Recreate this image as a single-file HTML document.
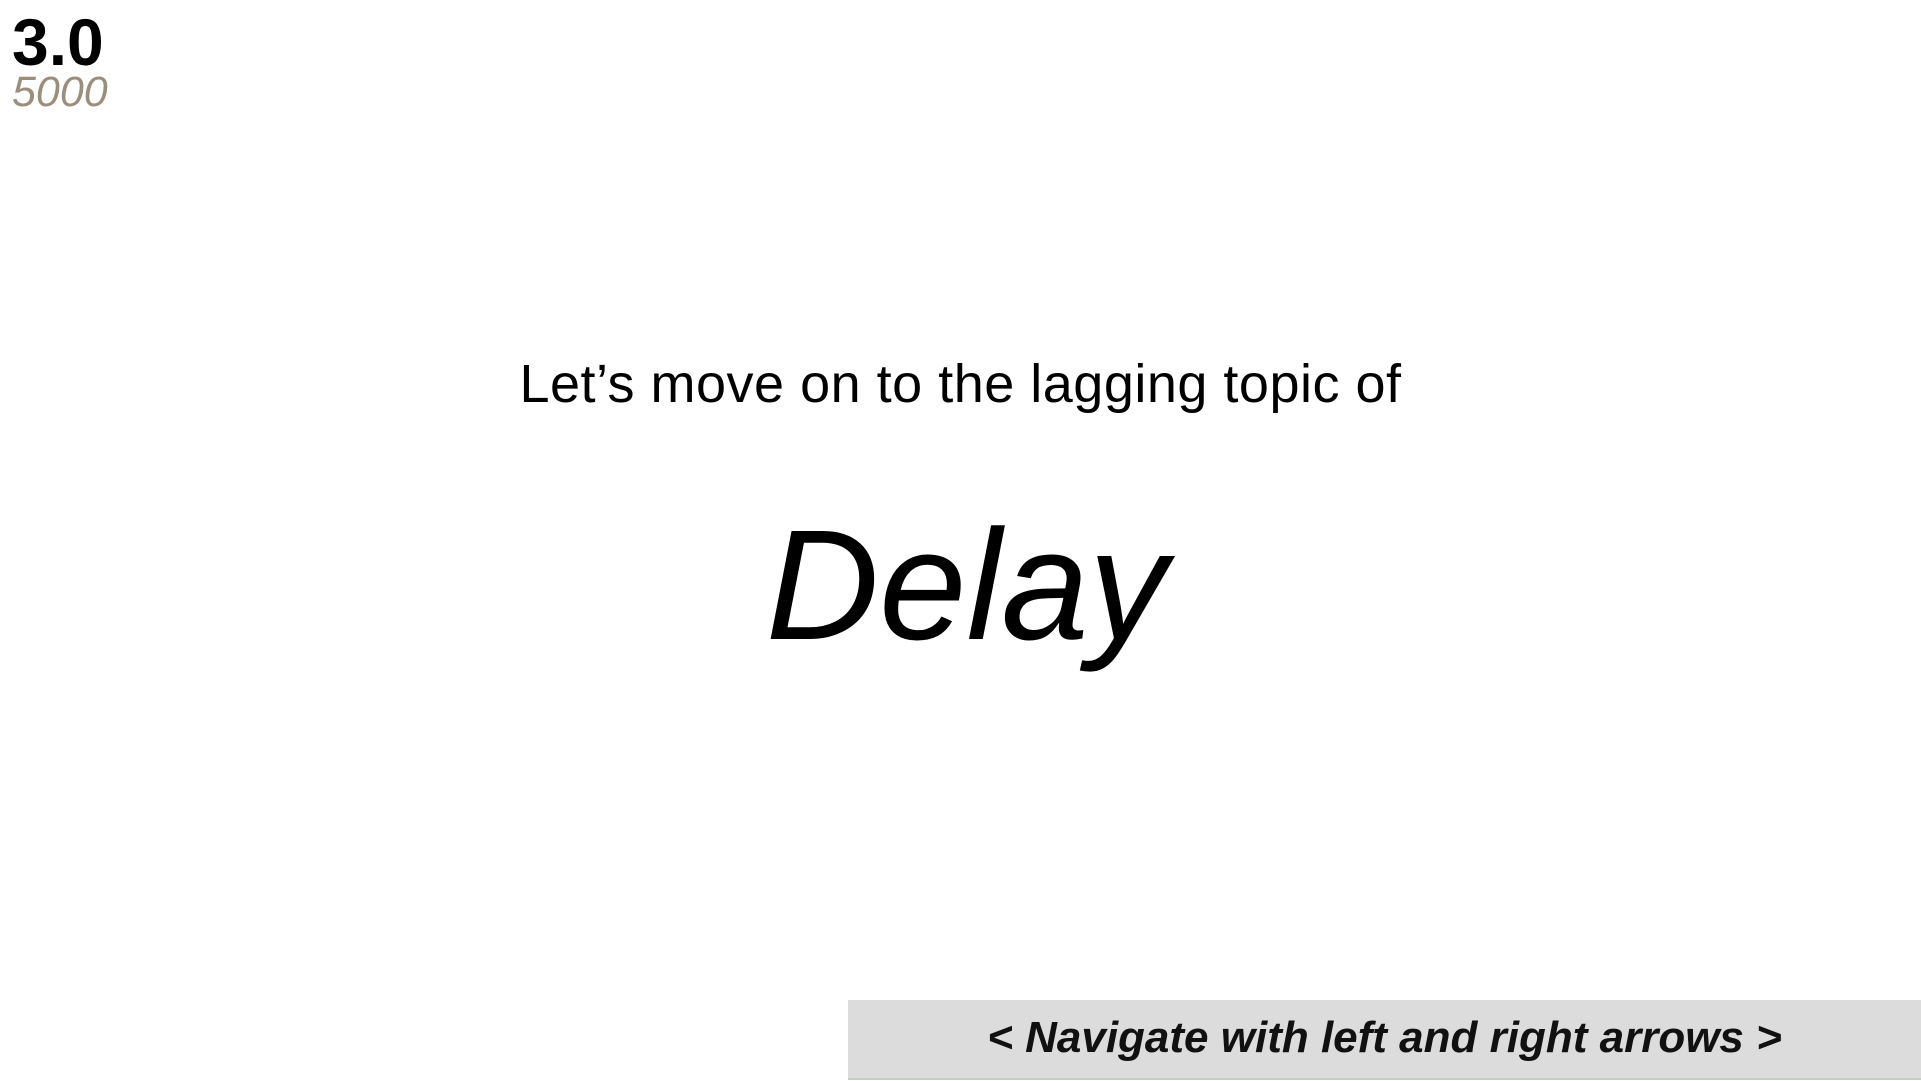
<!DOCTYPE html>
<html><head><style>
body{margin:0;width:1921px;height:1081px;background:#fff;position:relative;overflow:hidden;font-family:"Liberation Sans",sans-serif;}
.a{position:absolute;white-space:nowrap;}
</style></head><body>
<div class="a" style="left:12px;top:4px;font-size:66px;font-weight:bold;color:#000;">3.0</div>
<div class="a" style="left:12px;top:68px;font-size:43px;font-style:italic;color:#9c8e7d;">5000</div>
<div class="a" style="left:0;width:1921px;text-align:center;top:353px;font-size:54px;color:#000;letter-spacing:0.5px;">Let’s move on to the lagging topic of</div>
<div class="a" style="left:6px;width:1921px;text-align:center;top:496px;font-size:157px;font-style:italic;color:#000;">Delay</div>
<div class="a" style="left:848px;top:1000px;width:1073px;height:78px;background:#dcdcdc;border-bottom:2px solid #b9d7b0;"></div>
<div class="a" style="left:848px;width:1073px;text-align:center;top:1013px;font-size:44px;font-style:italic;font-weight:bold;color:#111;letter-spacing:0px;">&lt; Navigate with left and right arrows &gt;</div>
</body></html>
